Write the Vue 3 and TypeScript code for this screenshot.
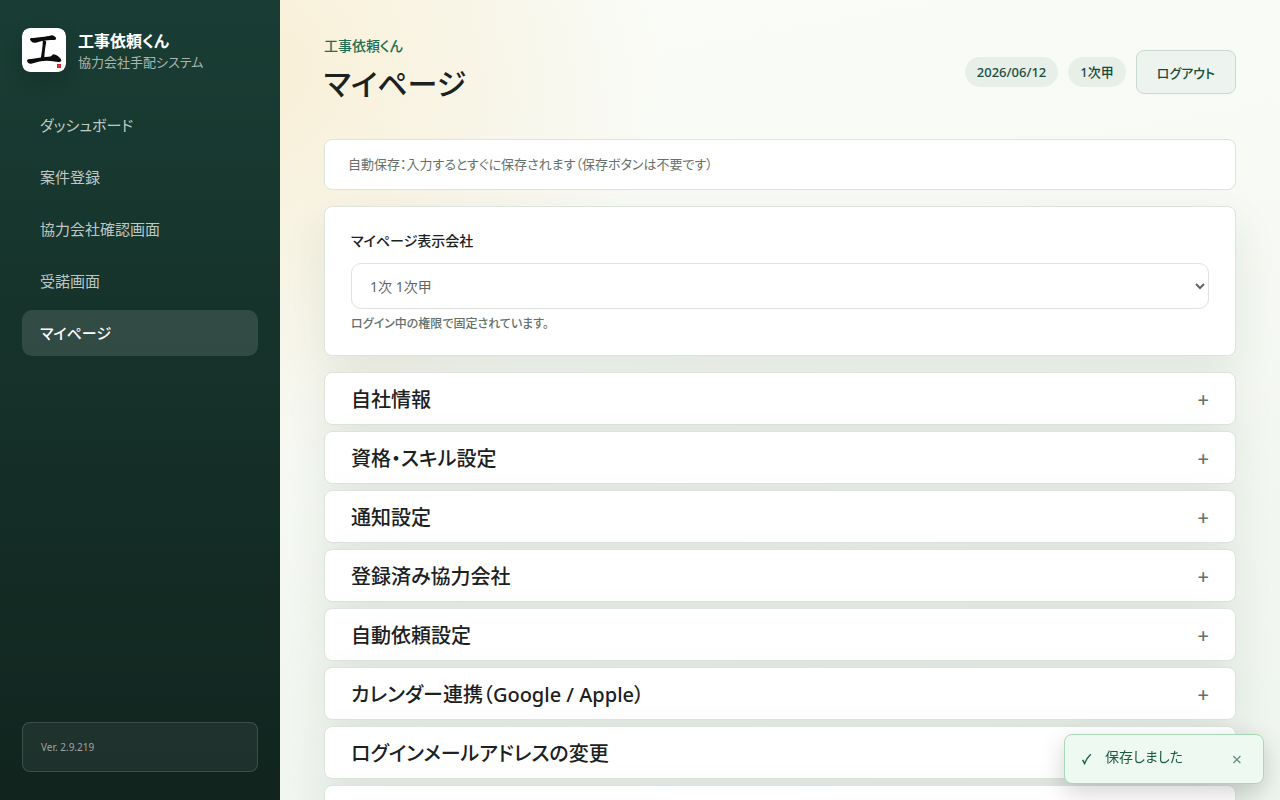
<script setup lang="ts">
import { ref } from 'vue'

interface NavItem {
  label: string
  active?: boolean
}

const navItems: NavItem[] = [
  { label: 'ダッシュボード' },
  { label: '案件登録' },
  { label: '協力会社確認画面' },
  { label: '受諾画面' },
  { label: 'マイページ', active: true },
]

const sections: string[] = [
  '自社情報',
  '資格・スキル設定',
  '通知設定',
  '登録済み協力会社',
  '自動依頼設定',
  'カレンダー連携（Google / Apple）',
  'ログインメールアドレスの変更',
  'パスワードの変更',
]

const company = ref('1')
const toastOpen = ref(true)
</script>

<template>
  <div class="shell">
    <aside class="sidebar">
      <div class="brand">
        <svg class="logo" viewBox="0 0 44 44" aria-hidden="true">
          <rect width="44" height="44" rx="8" fill="#fff" />
          <g fill="#0b0b0b">
            <path d="M8 11.600c-.2-1.300.8-1.800 2.400-1.700 3.600.1 6-.5 9.500-.9 3.600-.4 6.600-.8 9-1.500 1.600-.5 3.300.3 4.700 1.800 1.200 1.500.4 2.600-1.600 2.700-4.400.1-8.200.3-12 .9-2.600.4-4.600 1.500-7 1.900-2.400.3-4-1-5-3.200z" />
            <path d="M20.800 12.500c1.800-.6 3.600.3 3.400 1.800-1 5-1.600 10-1.900 15.700l-3.600.8c1-6.200 2.100-12.500 2.100-18.300z" />
            <path d="M5 32.600c.4-1.800 2.200-1.500 4.300-1.700 6.400-.8 13-1.700 19-2.300 1.600-.3 2.300-2.500 4-2.200 2.400.3 5.500 2.600 6.700 4.800.8 1.900-.2 2.900-2.100 2.800-3.900-.2-7.600-1.200-12-1.300-5.200.1-9.900 1-14.800 2.900-2.200.6-4.600.2-5.100-3z" />
          </g>
          <rect x="35" y="36" width="4" height="4" fill="#d9202a" />
          <path d="M36 37.500h2M36 38.800h2" stroke="#ef7278" stroke-width=".4" />
        </svg>
        <div class="brand-text">
          <strong>工事依頼くん</strong>
          <span>協力会社手配システム</span>
        </div>
      </div>
      <nav class="nav">
        <a
          v-for="item in navItems"
          :key="item.label"
          href="#"
          :class="{ active: item.active }"
          :aria-current="item.active ? 'page' : undefined"
          >{{ item.label }}</a
        >
      </nav>
      <div class="version">Ver. 2.9.219</div>
    </aside>

    <main class="main">
      <header class="topbar">
        <div>
          <p class="eyebrow">工事依頼くん</p>
          <h1>マイページ</h1>
        </div>
        <div class="actions">
          <span class="pill">2026/06/12</span>
          <span class="pill">1次甲</span>
          <button type="button" class="logout">ログアウト</button>
        </div>
      </header>

      <p class="notice">自動保存：入力するとすぐに保存されます（保存ボタンは不要です）</p>

      <section class="card">
        <label for="company">マイページ表示会社</label>
        <select id="company" v-model="company" disabled>
          <option value="1">1次 1次甲</option>
        </select>
        <p class="hint">ログイン中の権限で固定されています。</p>
      </section>

      <div class="sections">
        <details v-for="title in sections" :key="title" class="section">
          <summary>
            <h2>{{ title }}</h2>
            <span class="plus">+</span>
          </summary>
        </details>
      </div>
    </main>

    <div v-if="toastOpen" class="toast" role="status">
      <svg class="check" viewBox="0 0 12 14" aria-hidden="true">
        <path d="M1.600 7.800 3.600 11.600C5 8 7 4.600 9.800 2.200" fill="none" stroke="currentColor" stroke-width="1.400" />
      </svg>
      <span class="message">保存しました</span>
      <button type="button" aria-label="閉じる" @click="toastOpen = false">×</button>
    </div>
  </div>
</template>

<style>
body {
  margin: 0;
}
</style>

<style scoped>
.shell {
  display: grid;
  grid-template-columns: 280px minmax(0, 1fr);
  grid-template-rows: 100vh;
  color: #1b211f;
  font-family: 'Noto Sans', 'Noto Sans CJK JP', sans-serif;
  font-feature-settings: 'palt';
  background:
    radial-gradient(circle 400px at 20% 8%, rgba(246, 220, 165, 0.4), transparent),
    linear-gradient(170deg, #fafcf7 0%, #f8faf5 35%, #eef4ee 100%);
}
.sidebar {
  display: flex;
  flex-direction: column;
  box-sizing: border-box;
  padding: 28px 22px;
  background: linear-gradient(180deg, #193d34, #11241e);
}
.brand {
  display: flex;
  align-items: center;
  gap: 12px;
}
.logo {
  flex: none;
  width: 44px;
  height: 44px;
  border-radius: 8px;
  box-shadow: 0 8px 20px rgba(0, 0, 0, 0.16);
}
.brand-text {
  display: grid;
  padding-top: 2px;
}
.brand-text strong {
  color: #fff;
  font-size: 16px;
  line-height: 22px;
}
.brand-text span {
  color: rgba(255, 255, 255, 0.64);
  font-size: 13px;
  line-height: 20px;
}
.nav {
  display: grid;
  gap: 6px;
  margin-top: 30px;
}
.nav a {
  padding: 12px 18px;
  border-radius: 10px;
  color: rgba(255, 255, 255, 0.74);
  font-size: 15px;
  line-height: 22px;
  text-decoration: none;
}
.nav a.active {
  color: #fff;
  font-weight: 500;
  background: rgba(255, 255, 255, 0.12);
}
.version {
  margin-top: auto;
  padding: 16px 18px;
  border: 1px solid rgba(255, 255, 255, 0.14);
  border-radius: 8px;
  color: rgba(255, 255, 255, 0.56);
  font-size: 10px;
  line-height: 16px;
  background: rgba(255, 255, 255, 0.06);
}
.main {
  padding: 36px 44px 0;
  overflow-y: auto;
  scrollbar-width: none;
}
.topbar {
  display: flex;
  align-items: center;
  justify-content: space-between;
  margin-bottom: 31px;
}
p,
h1,
h2 {
  margin: 0;
}
.eyebrow {
  color: #1f6f50;
  font-size: 14px;
  font-weight: 500;
  line-height: 20px;
}
h1 {
  padding-top: 4px;
  font-size: 30px;
  font-weight: 500;
  line-height: 48px;
}
.actions {
  display: flex;
  align-items: center;
  gap: 10px;
}
.pill {
  padding: 5px 12px;
  border-radius: 15px;
  color: #174c3c;
  font-size: 13px;
  font-weight: 500;
  line-height: 20px;
  background: #e7efe8;
}
.logout {
  height: 44px;
  padding: 0 20px;
  border: 1px solid #c9d9d0;
  border-radius: 8px;
  color: #174c3c;
  font: inherit;
  font-size: 13px;
  font-weight: 500;
  font-feature-settings: inherit;
  background: #edf4f0;
}
.notice {
  padding: 14px 23px;
  border: 1px solid #dde4dd;
  border-radius: 8px;
  color: #66706a;
  font-size: 13px;
  line-height: 21px;
  background: #fff;
}
.card {
  margin: 16px 0;
  padding: 23px 26px 21px;
  border: 1px solid #dde4dd;
  border-radius: 8px;
  background: #fff;
  box-shadow: 0 18px 45px rgba(23, 50, 38, 0.09);
}
.card label {
  display: block;
  margin-bottom: 11px;
  font-size: 14px;
  font-weight: 500;
  line-height: 22px;
}
.card select {
  display: block;
  box-sizing: border-box;
  width: 100%;
  height: 46px;
  padding: 0 14px;
  border: 1px solid #dfe2de;
  border-radius: 10px;
  color: #626663;
  font: inherit;
  font-size: 14px;
  background: #fff;
  opacity: 1;
}
.hint {
  margin-top: 5px;
  color: #66706a;
  font-size: 12px;
  font-weight: 500;
  line-height: 20px;
}
.sections {
  display: grid;
  gap: 6px;
}
.section {
  border: 1px solid #dde4dd;
  border-radius: 8px;
  background: #fff;
  box-shadow: 0 18px 45px rgba(23, 50, 38, 0.09);
}
.section summary {
  display: flex;
  align-items: center;
  justify-content: space-between;
  padding: 12px 26px 9px;
  list-style: none;
}
.section h2 {
  font-size: 20px;
  font-weight: 500;
  line-height: 30px;
}
.plus {
  color: #66706a;
  font-size: 20px;
  font-weight: 500;
  line-height: 30px;
}
.toast {
  position: fixed;
  right: 16px;
  bottom: 16px;
  display: flex;
  align-items: center;
  box-sizing: border-box;
  width: 200px;
  height: 50px;
  padding: 0 16px;
  border: 1px solid #a7d9b8;
  border-radius: 8px;
  color: #1a5c40;
  background: #eef9f1;
  box-shadow: 0 8px 24px rgba(0, 0, 0, 0.18);
}
.check {
  width: 12px;
  height: 14px;
  margin-right: 12px;
}
.message {
  flex: 1;
  padding-bottom: 4px;
  font-size: 14px;
  line-height: 20px;
}
.toast button {
  width: 20px;
  height: 24px;
  padding: 0;
  border: 0;
  color: #5f9179;
  font: inherit;
  font-size: 18px;
  line-height: 24px;
  background: none;
}
</style>
